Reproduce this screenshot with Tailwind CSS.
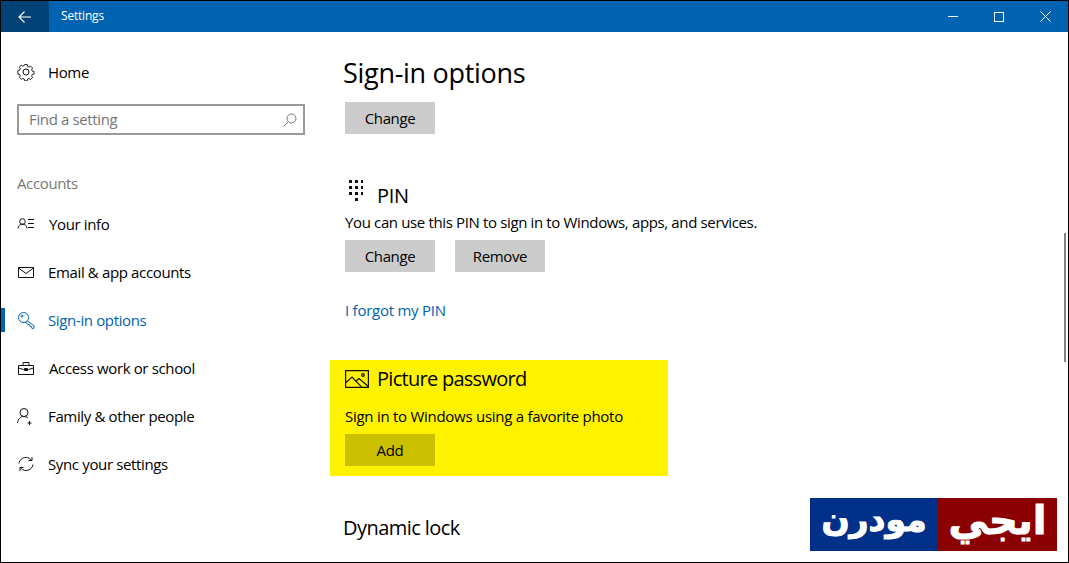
<!DOCTYPE html>
<html lang="en">
<head>
<meta charset="UTF-8">
<title>Settings</title>
<script src="https://cdn.jsdelivr.net/npm/@tailwindcss/browser@4"></script>
</head>
<body class="bg-white overflow-hidden">
<div class="relative w-[1069px] h-[563px] border border-black flex flex-col overflow-hidden text-[15px] tracking-[-0.36px] text-black font-['Open_Sans','Noto_Sans',sans-serif]">

  <!-- title bar -->
  <div class="h-[31px] shrink-0 bg-[#0063b1] flex items-center text-white">
    <div class="w-[48px] h-full bg-[#004275] flex items-center justify-center">
      <svg width="14" height="12" viewBox="0 0 14 12" fill="none" stroke="#fff" stroke-width="1.1"><path d="M13 6H1M6.500.5 1 6l5.500 5.500"/></svg>
    </div>
    <span class="ml-[12px] text-[12px] tracking-[-0.2px] -mt-px">Settings</span>
    <div class="ml-auto flex items-center h-full">
      <div class="w-[46px] flex justify-center"><div class="w-[10px] h-px bg-white"></div></div>
      <div class="w-[46px] flex justify-center"><div class="w-[10px] h-[10px] border border-white"></div></div>
      <div class="w-[46px] flex justify-center">
        <svg width="11" height="11" viewBox="0 0 11 11" stroke="#fff" stroke-width="1"><path d="M.5.500l10 10M10.500.500l-10 10"/></svg>
      </div>
    </div>
  </div>

  <div class="flex flex-1 min-h-0">
    <!-- sidebar -->
    <div class="w-[343px] shrink-0 flex flex-col">
      <div class="h-[17px] shrink-0"></div>
      <div class="flex items-center h-[46px] pl-[16px]">
        <svg width="18" height="18" viewBox="0 0 18 18" fill="none" stroke="#111" stroke-width="1"><circle cx="9" cy="9" r="3"/><path d="M7.600 1h2.800l.4 2 1.500.7 1.800-1 2 2-1 1.800.6 1.500 2 .5v2.800l-2 .4-.6 1.500 1 1.800-2 2-1.800-1-1.500.6-.4 2H7.600l-.4-2-1.500-.6-1.800 1-2-2 1-1.800-.6-1.500-2-.4V7.500l2-.5.600-1.500-1-1.800 2-2 1.800 1 1.500-.7z" transform="translate(.6 .6) scale(.93)"/></svg>
        <span class="ml-[13px]">Home</span>
      </div>
      <div class="ml-[16px] mt-[9px] w-[288px] h-[31px] border-2 border-[#999] flex items-center pl-[10px] pr-[6px] text-[#757575]">
        <span>Find a setting</span>
        <svg class="ml-auto" width="14" height="14" viewBox="0 0 14 14" fill="none" stroke="#777" stroke-width="1"><circle cx="8.500" cy="5.500" r="4.500"/><path d="M5.300 8.700 .5 13.500"/></svg>
      </div>
      <div class="ml-[16px] mt-[38px] text-[#767676] leading-[20px]">Accounts</div>
      <div class="mt-[7px] flex flex-col">
        <!-- your info -->
        <div class="flex items-center h-[48px] pl-[16px]">
          <svg width="18" height="12" viewBox="0 0 18 12" fill="none" stroke="#111" stroke-width="1"><circle cx="5.500" cy="3.500" r="2.800"/><path d="M1 10.500c.3-3 2-4.300 4.500-4.300s4.200 1.300 4.500 4.300M11 1.500h6M11 5.500h6M11 9.500h6"/></svg>
          <span class="ml-[14px]">Your info</span>
        </div>
        <!-- email -->
        <div class="flex items-center h-[48px] pl-[17px]">
          <svg width="16" height="11" viewBox="0 0 16 11" fill="none" stroke="#111" stroke-width="1"><path d="M.5.500h15v10H.5zM.5 1l7.500 5.500L15.500 1"/></svg>
          <span class="ml-[14px]">Email &amp; app accounts</span>
        </div>
        <!-- sign-in -->
        <div class="relative flex items-center h-[48px] pl-[17px] text-[#0063b1]">
          <div class="absolute left-0 top-[12px] w-[4px] h-[24px] bg-[#0063b1]"></div>
          <svg width="17" height="17" viewBox="0 0 17 17" fill="none" stroke="#0063b1" stroke-width="1"><circle cx="5.500" cy="5.500" r="5"/><circle cx="4" cy="4" r="1"/><path d="M9.300 8.800l6.700 5v2.500h-2.200l-.5-1.800-1.500-.3-.3-1.500-1.500-.3-3-2.400"/></svg>
          <span class="ml-[13px]">Sign-in options</span>
        </div>
        <!-- work -->
        <div class="flex items-center h-[48px] pl-[17px]">
          <svg width="16" height="13" viewBox="0 0 16 13" fill="none" stroke="#111" stroke-width="1"><path d="M.5 3.500h15v9H.5zM5 3.500v-3h6v3M.5 6l5 1.500h5l5-1.500M6.500 6.500h3v2h-3z"/></svg>
          <span class="ml-[15px]">Access work or school</span>
        </div>
        <!-- family -->
        <div class="flex items-center h-[48px] pl-[16px]">
          <svg width="17" height="17" viewBox="0 0 17 17" fill="none" stroke="#111" stroke-width="1"><circle cx="7" cy="4.500" r="4"/><path d="M.5 15c.4-4 3-6.500 6.500-6.500 1.500 0 2.800.4 3.800 1.300M12.500 13v4M10.500 15h4"/></svg>
          <span class="ml-[14px]">Family &amp; other people</span>
        </div>
        <!-- sync -->
        <div class="flex items-center h-[48px] pl-[17px]">
          <svg width="16" height="16" viewBox="0 0 16 16" fill="none" stroke="#111" stroke-width="1"><path d="M1 7.500C1.400 4 4.300 1.500 8 1.500c2.300 0 4.300 1 5.500 2.800M14 1v3.500h-3.500M15 8.500c-.4 3.500-3.300 6-7 6-2.300 0-4.300-1-5.500-2.800M2 15v-3.500h3.500"/></svg>
          <span class="ml-[14px]">Sync your settings</span>
        </div>
      </div>
    </div>

    <!-- content -->
    <div class="flex-1 min-w-0 flex flex-col">
      <div class="h-[23px] shrink-0"></div>
      <h1 class="-ml-px text-[27px] leading-[36px] tracking-[-0.3px]">Sign-in options</h1>
      <button class="ml-px mt-[11px] w-[90px] h-[32px] bg-[#cccccc]">Change</button>

      <div class="ml-px mt-[39px] h-[36px] flex items-start">
        <svg class="mt-[4px]" width="18" height="24" viewBox="0 0 18 24" fill="#111"><path d="M4 3h3v3H4zM10 3h3v3h-3zM16 3h2v3h-2zM4 9h3v3H4zM10 9h3v3h-3zM16 9h2v3h-2zM4 15h3v3H4zM10 15h3v3h-3zM16 15h2v3h-2zM10 21h3v3h-3z"/></svg>
        <span class="ml-[14px] text-[20px] leading-[36px] mt-[5px]">PIN</span>
      </div>
      <p class="ml-px mt-[3px] leading-[20px]">You can use this PIN to sign in to Windows, apps, and services.</p>
      <div class="ml-px mt-[8px] flex gap-[20px]">
        <button class="w-[90px] h-[32px] bg-[#cccccc]">Change</button>
        <button class="w-[90px] h-[32px] bg-[#cccccc]">Remove</button>
      </div>
      <a class="ml-px mt-[28px] leading-[20px] text-[#0063b1] tracking-[-0.25px]">I forgot my PIN</a>

      <!-- highlighted section -->
      <div class="-ml-[14px] mt-[40px] w-[338px] h-[116px] bg-[#fff200] pl-[15px] pt-[7px]">
        <div class="flex items-center h-[24px]">
          <svg width="24" height="18" viewBox="0 0 24 18" fill="none" stroke="#111" stroke-width="1.200"><path d="M.6.600h22.800v16.800H.6zM.6 13l6.400-6 10 10.400M11 11l3-2.500 9.400 8"/><circle cx="18" cy="5" r="1.300"/></svg>
          <span class="ml-[8px] text-[20px] tracking-[-0.72px]">Picture password</span>
        </div>
        <p class="mt-[15px] leading-[20px] tracking-[-0.27px]">Sign in to Windows using a favorite photo</p>
        <button class="mt-[8px] w-[90px] h-[32px] bg-[#cbc000]">Add</button>
      </div>

      <h2 class="-ml-px mt-[38px] text-[20px] leading-[28px] tracking-[-0.55px]">Dynamic lock</h2>
    </div>
  </div>

  <!-- scrollbar -->
  <div class="absolute right-[2px] top-[232px] w-[2px] h-[129px] bg-[#858585]"></div>

  <!-- logo -->
  <div dir="rtl" class="absolute left-[809px] top-[497px] w-[247px] h-[53px] flex font-['DejaVu_Sans',sans-serif] font-bold text-white tracking-normal [-webkit-text-stroke:1px_white]">
    <div class="w-[119px] bg-[#8b0000] text-center text-[40px] leading-[44px]">ايجي</div>
    <div class="w-[128px] bg-[#003087] text-center text-[33px] leading-[44px]">مودرن</div>
  </div>
</div>
</body>
</html>
